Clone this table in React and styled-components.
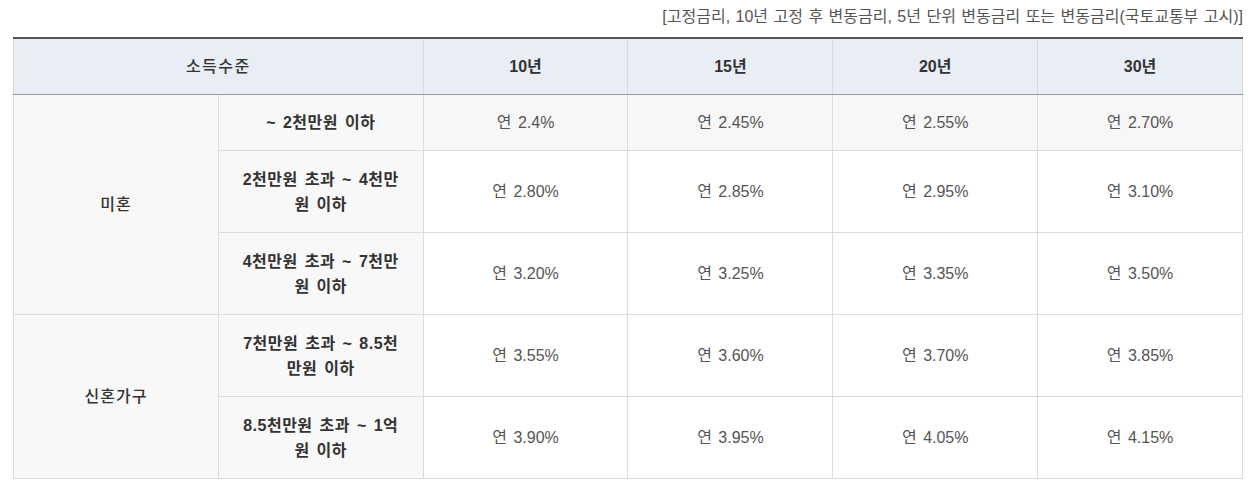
import React from "react";
import styled, { createGlobalStyle } from "styled-components";

const Global = createGlobalStyle`
  html, body { margin: 0; padding: 0; background: #fff; }
  body { font-family: "Liberation Sans", "Noto Sans CJK KR", sans-serif; }
`;

const Page = styled.div`
  width: 1230px;
  padding: 6px 0 0 13px;
`;

const Note = styled.p`
  margin: 0 0 9px;
  text-align: right;
  font-size: 16px;
  line-height: 22px;
  color: #555;
  word-spacing: 1px;
`;

const Table = styled.table`
  width: 1230px;
  border-collapse: collapse;
  table-layout: fixed;
  border-top: 2px solid #5a514f;
  border-bottom: 1px solid #aaa;
  font-size: 16px;
  line-height: 25px;
`;

const Th = styled.th`
  height: 55px;
  padding: 0;
  background: #e9edf5;
  color: #333;
  font-weight: ${(p) => (p.$light ? 500 : 700)};
  border: 1px solid #d9d9d9;
  border-top: none;
  border-bottom: 1px solid #999;
  text-align: center;
  vertical-align: middle;
  letter-spacing: ${(p) => (p.$light ? "1.5px" : "0")};
`;

const Label = styled.td`
  height: ${(p) => (p.$tall ? "81px" : "55px")};
  padding: 0 ${(p) => (p.$group ? "10px" : "20px")};
  background: #f8f8f8;
  color: #333;
  font-weight: ${(p) => (p.$group ? 500 : 700)};
  letter-spacing: ${(p) => (p.$group ? "1px" : "0.5px")};
  word-spacing: 2px;
  border: 1px solid #dcdcdc;
  text-align: center;
  vertical-align: middle;
  word-break: keep-all;
`;

const Cell = styled.td`
  padding: 0;
  background: ${(p) => (p.$hl ? "#f7f7f7" : "#fff")};
  color: #555;
  border: 1px solid #dcdcdc;
  text-align: center;
  vertical-align: middle;
  word-spacing: 2px;
`;

const rows = [
  { group: "미혼", span: 3, label: "~ 2천만원 이하", vals: ["2.4%", "2.45%", "2.55%", "2.70%"], tall: false, hl: true },
  { label: ["2천만원 초과 ~ 4천만", "원 이하"], vals: ["2.80%", "2.85%", "2.95%", "3.10%"], tall: true },
  { label: ["4천만원 초과 ~ 7천만", "원 이하"], vals: ["3.20%", "3.25%", "3.35%", "3.50%"], tall: true },
  { group: "신혼가구", span: 2, label: ["7천만원 초과 ~ 8.5천", "만원 이하"], vals: ["3.55%", "3.60%", "3.70%", "3.85%"], tall: true },
  { label: ["8.5천만원 초과 ~ 1억", "원 이하"], vals: ["3.90%", "3.95%", "4.05%", "4.15%"], tall: true },
];

export default function App() {
  return (
    <Page>
      <Global />
      <Note>[고정금리, 10년 고정 후 변동금리, 5년 단위 변동금리 또는 변동금리(국토교통부 고시)]</Note>
      <Table>
        <thead>
          <tr>
            <Th colSpan={2} $light>
              소득수준
            </Th>
            <Th>10년</Th>
            <Th>15년</Th>
            <Th>20년</Th>
            <Th>30년</Th>
          </tr>
        </thead>
        <tbody>
          {rows.map((r, i) => (
            <tr key={i}>
              {r.group && (
                <Label $group rowSpan={r.span}>
                  {r.group}
                </Label>
              )}
              <Label $tall={r.tall}>
                {Array.isArray(r.label) ? (
                  <>
                    {r.label[0]}
                    <br />
                    {r.label[1]}
                  </>
                ) : (
                  r.label
                )}
              </Label>
              {r.vals.map((v, j) => (
                <Cell key={j} $hl={r.hl}>
                  연 {v}
                </Cell>
              ))}
            </tr>
          ))}
        </tbody>
      </Table>
    </Page>
  );
}
